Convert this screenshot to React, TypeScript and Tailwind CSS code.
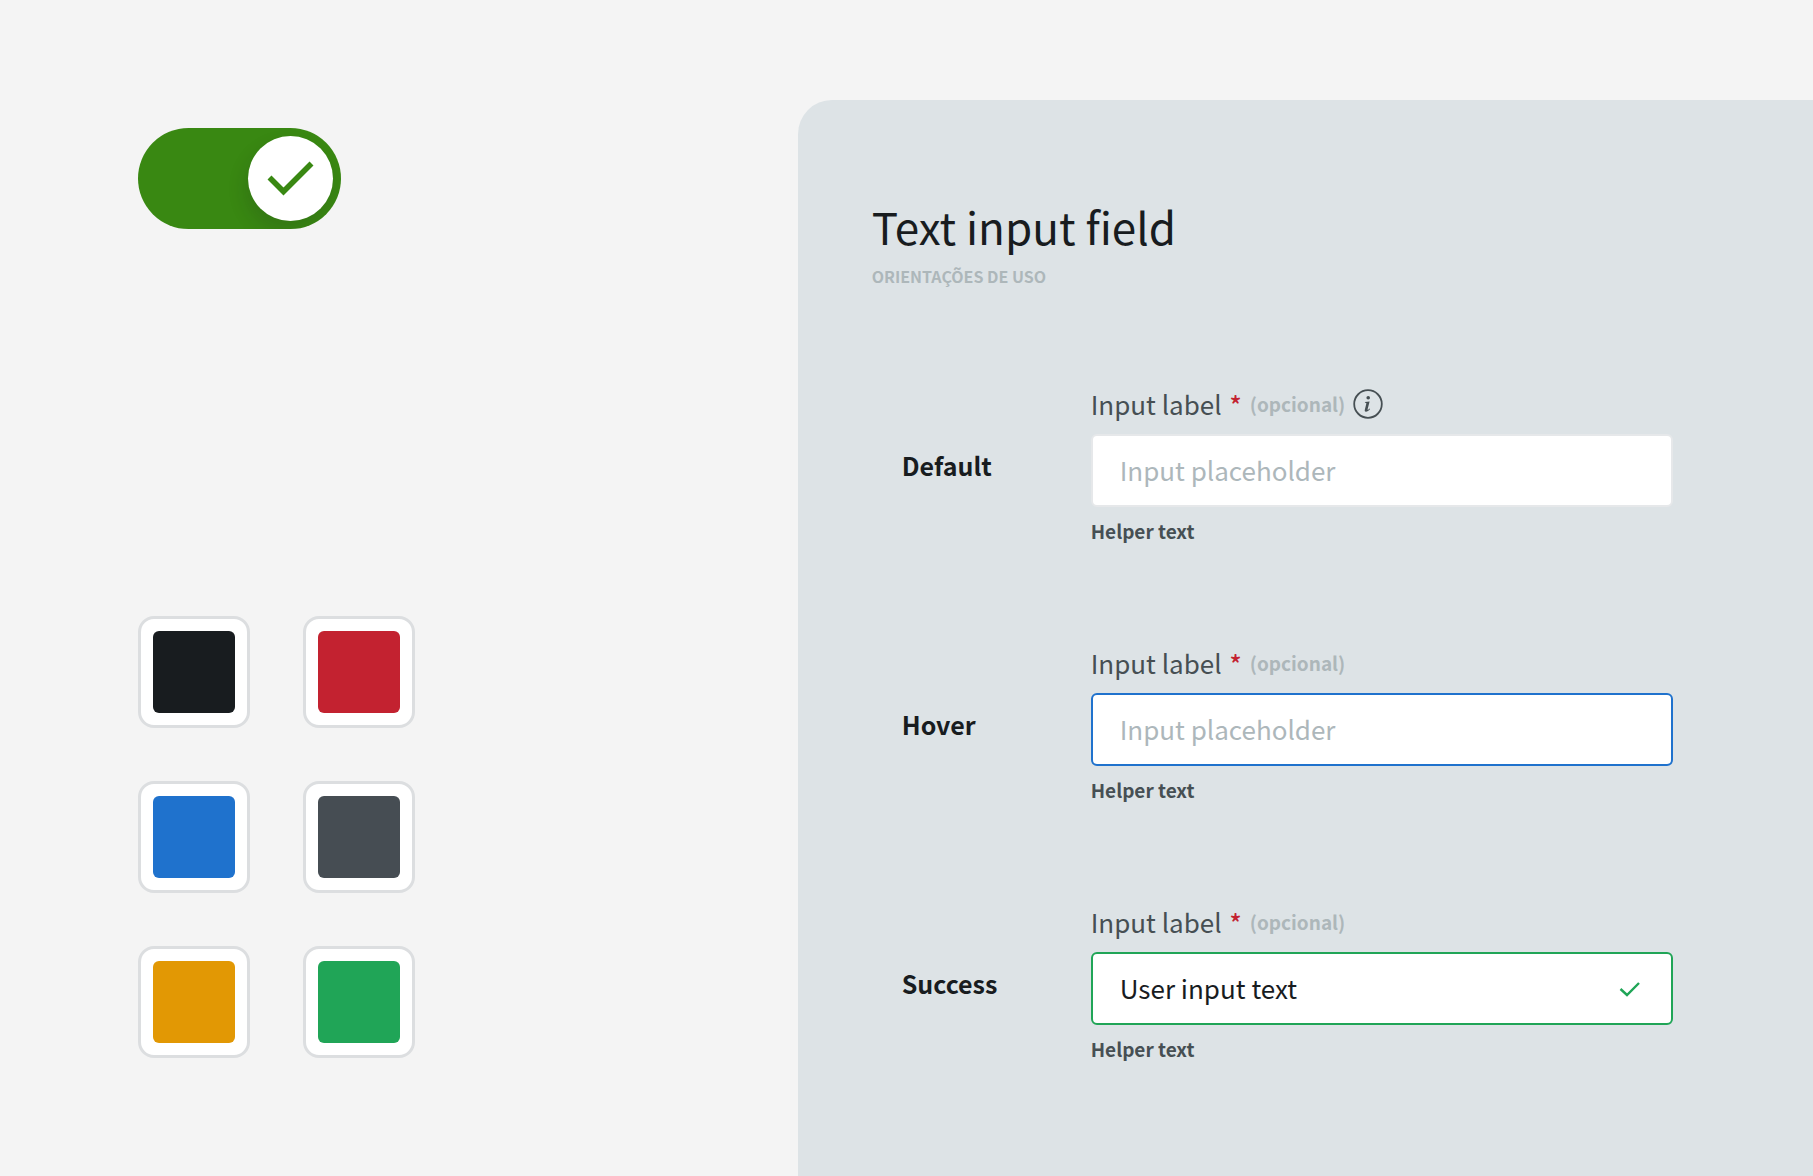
import { useState } from "react";

type Status = "default" | "hover" | "success";

const swatches = [
  { name: "Black", color: "bg-[#181c1f]" },
  { name: "Red", color: "bg-[#c32230]" },
  { name: "Blue", color: "bg-[#1f72cd]" },
  { name: "Slate", color: "bg-[#464d53]" },
  { name: "Amber", color: "bg-[#e29804]" },
  { name: "Green", color: "bg-[#20a557]" },
];

const borders: Record<Status, string> = {
  default: "border-[#e6e8ea]",
  hover: "border-[#1f72cd]",
  success: "border-[#20a557]",
};

function Toggle() {
  const [on, setOn] = useState(true);
  return (
    <button
      type="button"
      role="switch"
      aria-checked={on}
      aria-label="Toggle"
      onClick={() => setOn(!on)}
      className={`flex w-[203px] overflow-hidden rounded-full p-2 ${on ? "justify-end bg-[#398812]" : "justify-start bg-[#adb5b9]"}`}
    >
      <span className="flex size-[85px] rounded-full bg-white shadow-[-3px_10px_18px_rgba(24,28,31,0.16)]">
        <svg viewBox="0 0 85 85" className="size-full" fill="none" stroke="#398812" strokeWidth="5.6" aria-hidden="true">
          <path d="M21.5 41.5 35.5 55.5 63.5 27.5" />
        </svg>
      </span>
    </button>
  );
}

function InfoIcon() {
  return (
    <svg viewBox="0 0 30 30" className="size-[30px]" aria-hidden="true">
      <circle cx="15" cy="15" r="13.8" fill="none" stroke="#464f53" strokeWidth="1.8" />
      <circle cx="15.2" cy="8.7" r="1.8" fill="#464f53" />
      <path
        d="M12 13.1 16.6 12.4 14.6 20.2C14.4 21.1 15 21.1 16.7 19.5L17.1 20C15.6 21.9 14.3 22.7 13 22.7 11.9 22.7 11.5 21.9 11.8 20.7L13.3 14.8C13.5 14 13.2 13.8 11.9 13.8Z"
        fill="#464f53"
      />
    </svg>
  );
}

function Field({ title, status, value, info }: { title: string; status: Status; value?: string; info?: boolean }) {
  const id = `field-${status}`;
  return (
    <section className="flex items-center">
      <h2 className="w-[189px] shrink-0 text-[25px] leading-8 font-bold text-[#181c1f]">{title}</h2>
      <div className="min-w-0 flex-1">
        <div className="flex h-10 items-center">
          <label htmlFor={id} className="flex items-center leading-10">
            <span className="text-[26px] text-[#464f53]">Input label</span>
            <span className="ml-2 text-[25px] font-medium text-[#c32230]">*</span>
            <span className="ml-2 text-[19px] font-bold text-[#adb7ba]">(opcional)</span>
          </label>
          {info && (
            <button type="button" aria-label="More information" className="ml-2">
              <InfoIcon />
            </button>
          )}
        </div>
        <div className={`mt-2.5 flex h-[73px] items-center rounded-md border-2 bg-white px-[27px] ${borders[status]}`}>
          <input
            id={id}
            type="text"
            defaultValue={value}
            placeholder="Input placeholder"
            aria-describedby={`${id}-help`}
            className="h-full min-w-0 flex-1 bg-transparent pb-0.5 text-[26px] text-[#181c1f] outline-none placeholder:text-[#adb7bb]"
          />
          {status === "success" && (
            <svg viewBox="0 0 28 28" className="size-7" fill="none" stroke="#20a557" strokeWidth="2.4" aria-hidden="true">
              <path d="M4.5 14 11 20 23 8" />
            </svg>
          )}
        </div>
        <p id={`${id}-help`} className="mt-2.5 text-[19px] leading-7 font-bold text-[#464f53]">
          Helper text
        </p>
      </div>
    </section>
  );
}

export default function App() {
  return (
    <div className="flex min-h-screen bg-[#f4f4f4] font-['Noto_Sans_CJK_SC',sans-serif]">
      <aside className="w-[44%] shrink-0 pt-32 pl-[138px]">
        <Toggle />
        <div className="mt-[387px] grid w-fit grid-cols-2 gap-[53px]">
          {swatches.map((s) => (
            <button
              key={s.name}
              type="button"
              aria-label={s.name}
              className="size-[112px] rounded-2xl border-[3px] border-[#dcdee0] bg-white p-3"
            >
              <span className={`block size-full rounded-md ${s.color}`} />
            </button>
          ))}
        </div>
      </aside>
      <main className="mt-25 flex-1 rounded-tl-[34px] bg-[#dde3e6] pt-[98px] pr-[140px] pl-[74px]">
        <h1 className="text-[44px] leading-[56px] text-[#181c1f]">Text input field</h1>
        <p className="mt-2.5 text-[16px] leading-6 font-bold text-[#adb7ba]">ORIENTAÇÕES DE USO</p>
        <div className="mt-24 flex flex-col gap-[98px] pl-[30px]">
          <Field title="Default" status="default" info />
          <Field title="Hover" status="hover" />
          <Field title="Success" status="success" value="User input text" />
        </div>
      </main>
    </div>
  );
}
